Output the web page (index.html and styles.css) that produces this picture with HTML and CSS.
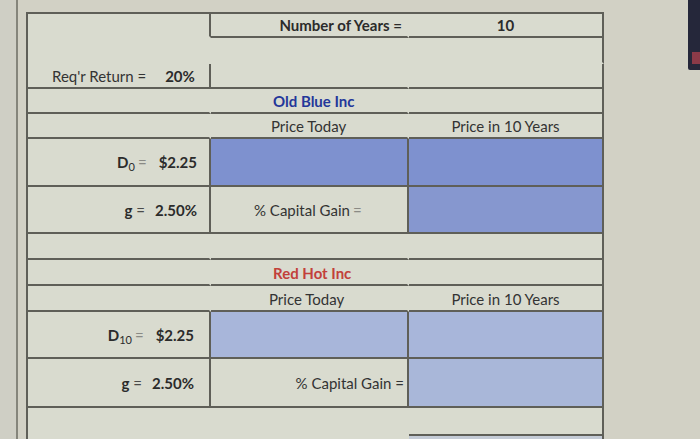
FILE: index.html
```html
<!DOCTYPE html>
<html>
<head>
<meta charset="utf-8">
<link rel="stylesheet" href="styles.css">
</head>
<body>
<div class="gutter"></div>
<div class="sheet">
  <!-- r1 -->
  <div class="c nb"></div>
  <div class="c nr right pr14 b">Number of Years =</div>
  <div class="c center b">10</div>
  <!-- r2 -->
  <div class="c nb nr"></div>
  <div class="c nb nr"></div>
  <div class="c nb"></div>
  <!-- r3 -->
  <div class="c pl26"><span>Req'r Return =</span><span class="b val20">20%</span></div>
  <div class="c nr"></div>
  <div class="c"></div>
  <!-- r4 -->
  <div class="c nr"></div>
  <div class="c nr pl64 b blue low">Old Blue Inc</div>
  <div class="c"></div>
  <!-- r5 -->
  <div class="c nr"></div>
  <div class="c nr pl62 low">Price Today</div>
  <div class="c center low">Price in 10 Years</div>
  <!-- r6 -->
  <div class="c right pr13"><span class="b">D<sub>0</sub></span><span class="eq">=</span><span class="b">$2.25</span></div>
  <div class="c fill1"></div>
  <div class="c fill1"></div>
  <!-- r7 -->
  <div class="c right pr13"><span class="b">g</span><span class="eq2">=</span><span class="b">2.50%</span></div>
  <div class="c pl45">% Capital Gain <span class="eq">=</span></div>
  <div class="c fill2"></div>
  <!-- r8 -->
  <div class="c nr"></div>
  <div class="c nr"></div>
  <div class="c"></div>
  <!-- r9 -->
  <div class="c nr"></div>
  <div class="c nr pl64 b red low">Red Hot Inc</div>
  <div class="c"></div>
  <!-- r10 -->
  <div class="c nr"></div>
  <div class="c nr pl60 low">Price Today</div>
  <div class="c center low">Price in 10 Years</div>
  <!-- r11 -->
  <div class="c right pr16"><span class="b">D<sub>10</sub></span><span class="eq">=</span><span class="b">$2.25</span></div>
  <div class="c fill3"></div>
  <div class="c fill3"></div>
  <!-- r12 -->
  <div class="c right pr16"><span class="b">g</span><span class="eq2">=</span><span class="b">2.50%</span></div>
  <div class="c right pr3">% Capital Gain =</div>
  <div class="c fill4"></div>
  <!-- r13 -->
  <div class="c nr nb"></div>
  <div class="c nr nb"></div>
  <div class="c"></div>
  <!-- r14 -->
  <div class="c nr nb"></div>
  <div class="c nr nb"></div>
  <div class="c fill5"></div>
</div>
<div class="edge"><div class="glint"></div></div>
</body>
</html>
```

FILE: styles.css
```css
html, body {
  margin: 0;
  padding: 0;
}
body {
  width: 700px;
  height: 439px;
  overflow: hidden;
  background: #d2d1c5;
  display: flex;
  align-items: flex-start;
  font-family: Lato, "Open Sans", sans-serif;
  font-size: 15px;
  color: #333333;
}
.gutter {
  width: 16px;
  height: 439px;
  flex: none;
  border-right: 2px solid #85857b;
  background: #cfcfc5;
}
.sheet {
  flex: none;
  margin-top: 12px;
  margin-left: 8px;
  display: grid;
  grid-template-columns: 183px 198px 195px;
  grid-template-rows: 24px 26px 25px 25px 25px 48px 47px 26px 26px 26px 47px 49px 28px 20px;
  border-top: 2px solid #5f5f58;
  border-left: 2px solid #5f5f58;
  background: #d9dbcf;
}
.c {
  box-sizing: border-box;
  border-right: 2px solid #5f5f58;
  border-bottom: 2px solid #5f5f58;
  display: flex;
  align-items: center;
  white-space: nowrap;
}
.nr { border-right-color: transparent; }
.nb { border-bottom-color: transparent; }
.low { align-items: flex-end; padding-bottom: 2px; }
.right { justify-content: flex-end; }
.center { justify-content: center; }
.pr14 { padding-right: 5px; }
.pr13 { padding-right: 12px; }
.pr16 { padding-right: 15px; }
.pr3 { padding-right: 3px; }
.pl26 { padding-left: 24px; }
.pl64 { padding-left: 62px; }
.pl62 { padding-left: 60px; }
.pl60 { padding-left: 58px; }
.pl45 { padding-left: 43px; }
.b { font-weight: 700; color: #2b2b2b; }
.blue { color: #24379a; }
.red { color: #c2403a; }
.val20 { margin-left: 19px; }
.eq { color: #8a8a85; margin: 0 12px 0 3px; }
.eq2 { color: #4a4a4a; margin: 0 10px 0 4px; }
sub {
  font-size: 11px;
  font-weight: 400;
  vertical-align: -3px;
  line-height: 0;
}
.fill1 { background: #7e91cf; }
.fill2 { background: #8697cf; }
.fill3 { background: #a8b6da; }
.fill4 { background: #a9b7d9; }
.fill5 { background: #c4cbd6; }
.edge {
  flex: none;
  margin-left: auto;
  width: 12px;
  height: 70px;
  background: #25273a;
  border-bottom-left-radius: 2px;
  padding-top: 52px;
  box-sizing: border-box;
}
.glint {
  width: 8px;
  height: 12px;
  margin-left: 4px;
  background: #8a3a48;
}
```
